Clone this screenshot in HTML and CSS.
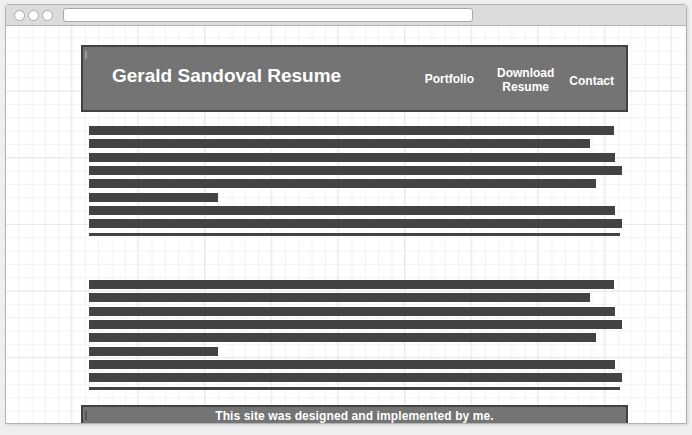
FILE: index.html
```html
<!DOCTYPE html>
<html>
<head>
<meta charset="utf-8">
<link rel="stylesheet" href="styles.css">
</head>
<body>
<div class="window">
  <div class="titlebar">
    <span class="dot"></span><span class="dot"></span><span class="dot"></span>
    <div class="address"></div>
  </div>
  <div class="viewport">
    <div class="page">
      <header class="site-header">
        <span class="mark"></span>
        <h1 class="title">Gerald Sandoval Resume</h1>
        <nav class="nav">
          <span class="nav-item portfolio">Portfolio</span>
          <span class="nav-item download">Download<br>Resume</span>
          <span class="nav-item contact">Contact</span>
        </nav>
      </header>
      <section class="block first">
        <div class="bar" style="width:525px"></div>
        <div class="bar" style="width:501px"></div>
        <div class="bar" style="width:526px"></div>
        <div class="bar" style="width:533px"></div>
        <div class="bar" style="width:507px"></div>
        <div class="bar" style="width:129px"></div>
        <div class="bar" style="width:526px"></div>
        <div class="bar" style="width:533px"></div>
        <div class="bar thin" style="width:531px"></div>
      </section>
      <section class="block second">
        <div class="bar" style="width:525px"></div>
        <div class="bar" style="width:501px"></div>
        <div class="bar" style="width:526px"></div>
        <div class="bar" style="width:533px"></div>
        <div class="bar" style="width:507px"></div>
        <div class="bar" style="width:129px"></div>
        <div class="bar" style="width:526px"></div>
        <div class="bar" style="width:533px"></div>
        <div class="bar thin" style="width:531px"></div>
      </section>
      <footer class="site-footer">
        <span class="mark dark"></span>
        This site was designed and implemented by me.
      </footer>
    </div>
  </div>
</div>
</body>
</html>
```
FILE: styles.css
```css
html, body {
  margin: 0;
  padding: 0;
}
body {
  background: #efefef;
  font-family: "Liberation Sans", Arial, sans-serif;
  padding: 4px 5px 0 5px;
  height: 435px;
  box-sizing: border-box;
  overflow: hidden;
}
.window {
  width: 682px;
  height: 420px;
  box-sizing: border-box;
  border: 1px solid #b3b3b3;
  border-radius: 4px 4px 0 0;
  background: #fff;
  overflow: hidden;
  display: flex;
  flex-direction: column;
  box-shadow: 1px 1px 3px rgba(0,0,0,0.12);
}
.titlebar {
  height: 20px;
  flex: none;
  background: #dcdcdc;
  border-bottom: 1px solid #b3b3b3;
  display: flex;
  align-items: center;
  padding-left: 8px;
}
.dot {
  width: 9px;
  height: 9px;
  border-radius: 50%;
  background: #fff;
  border: 1px solid #a8a8a8;
  margin-right: 3px;
  flex: none;
}
.address {
  margin-left: 7px;
  width: 408px;
  height: 12px;
  background: #fff;
  border: 1px solid #a8a8a8;
  border-radius: 3px;
}
.viewport {
  flex: 1;
  overflow: hidden;
  background-color: #fff;
  background-image:
    linear-gradient(to right, #e9e9e9 1px, transparent 1px),
    linear-gradient(to bottom, #e9e9e9 1px, transparent 1px),
    linear-gradient(to right, #f3f3f3 1px, transparent 1px),
    linear-gradient(to bottom, #f3f3f3 1px, transparent 1px);
  background-size: 66.667px 66.667px, 66.667px 66.667px, 13.333px 13.333px, 13.333px 13.333px;
  background-position: -2px -2px, -2px -2px, -1px -2px, -1px -2px;
}
.page {
  width: 547px;
  margin: 19px 0 0 75px;
}
.site-header {
  position: relative;
  height: 67px;
  box-sizing: border-box;
  border: 2px solid #424242;
  background: #747474;
  display: flex;
  color: #fff;
}
.mark {
  position: absolute;
  left: 2px;
  top: 4px;
  width: 2px;
  height: 8px;
  background: #9a9a9a;
}
.mark.dark {
  background: #5a5550;
  top: 4px;
  height: 9px;
}
.title {
  margin: 18px 0 0 29px;
  font-size: 19px;
  line-height: 22px;
  font-weight: bold;
  flex: 1;
}
.nav {
  display: flex;
  font-size: 12px;
  font-weight: bold;
  line-height: 14px;
  padding-right: 12px;
}
.nav-item {
  display: block;
  text-align: center;
}
.portfolio {
  margin-top: 25px;
}
.download {
  margin-top: 19px;
  margin-left: 23px;
}
.contact {
  margin-top: 27px;
  margin-left: 15px;
}
.block {
  display: flex;
  flex-direction: column;
  gap: 4.333px;
  padding-left: 8px;
}
.block.first {
  margin-top: 14px;
}
.block.second {
  margin-top: 44.333px;
}
.bar {
  height: 9px;
  background: #434343;
}
.bar.thin {
  height: 3px;
}
.site-footer {
  position: relative;
  margin-top: 15.5px;
  height: 21px;
  box-sizing: border-box;
  border: 2px solid #424242;
  background: #747474;
  color: #fff;
  font-size: 12px;
  font-weight: bold;
  line-height: 15px;
  padding-top: 2px;
  letter-spacing: 0.1px;
  text-align: center;
}
```
